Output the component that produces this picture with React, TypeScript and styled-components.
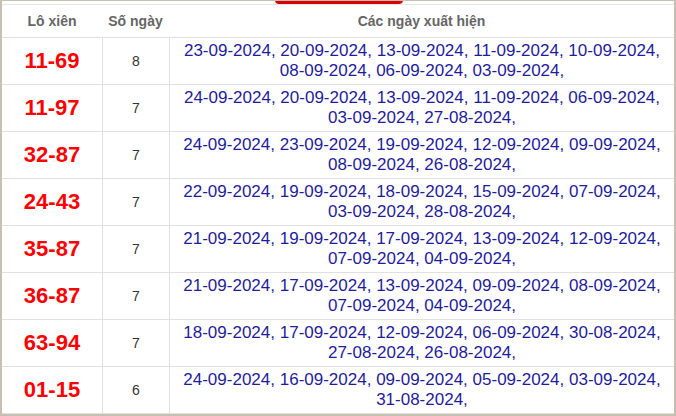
import styled, { createGlobalStyle } from "styled-components"

type PairRow = {
  pair: string
  count: number
  dates: string[]
}

const rows: PairRow[] = [
  {
    pair: "11-69",
    count: 8,
    dates: ["23-09-2024", "20-09-2024", "13-09-2024", "11-09-2024", "10-09-2024", "08-09-2024", "06-09-2024", "03-09-2024"],
  },
  {
    pair: "11-97",
    count: 7,
    dates: ["24-09-2024", "20-09-2024", "13-09-2024", "11-09-2024", "06-09-2024", "03-09-2024", "27-08-2024"],
  },
  {
    pair: "32-87",
    count: 7,
    dates: ["24-09-2024", "23-09-2024", "19-09-2024", "12-09-2024", "09-09-2024", "08-09-2024", "26-08-2024"],
  },
  {
    pair: "24-43",
    count: 7,
    dates: ["22-09-2024", "19-09-2024", "18-09-2024", "15-09-2024", "07-09-2024", "03-09-2024", "28-08-2024"],
  },
  {
    pair: "35-87",
    count: 7,
    dates: ["21-09-2024", "19-09-2024", "17-09-2024", "13-09-2024", "12-09-2024", "07-09-2024", "04-09-2024"],
  },
  {
    pair: "36-87",
    count: 7,
    dates: ["21-09-2024", "17-09-2024", "13-09-2024", "09-09-2024", "08-09-2024", "07-09-2024", "04-09-2024"],
  },
  {
    pair: "63-94",
    count: 7,
    dates: ["18-09-2024", "17-09-2024", "12-09-2024", "06-09-2024", "30-08-2024", "27-08-2024", "26-08-2024"],
  },
  {
    pair: "01-15",
    count: 6,
    dates: ["24-09-2024", "16-09-2024", "09-09-2024", "05-09-2024", "03-09-2024", "31-08-2024"],
  },
]

export default function App() {
  return (
    <>
      <GlobalStyle />
      <Frame>
        <ActiveTab />
        <HeaderRow>
          <HeadCell>Lô xiên</HeadCell>
          <HeadCell>Số ngày</HeadCell>
          <HeadCell>Các ngày xuất hiện</HeadCell>
        </HeaderRow>
        {rows.map((row) => (
          <Row key={row.pair}>
            <PairCell>{row.pair}</PairCell>
            <CountCell>{row.count}</CountCell>
            <DatesCell>
              {row.dates.map((d) => (
                <span key={d}>{d}, </span>
              ))}
            </DatesCell>
          </Row>
        ))}
      </Frame>
    </>
  )
}

const GlobalStyle = createGlobalStyle`
  body {
    margin: 0;
    background: #fff;
    font-family: "Liberation Sans", Arial, sans-serif;
  }
`

const Frame = styled.div`
  position: relative;
  box-sizing: border-box;
  width: 676px;
  height: 416px;
  border: 2px solid #c8beb2;
  border-top-width: 1px;
  padding-top: 3px;
  overflow: hidden;
`

const ActiveTab = styled.div`
  position: absolute;
  top: -1px;
  left: 273px;
  width: 128px;
  height: 4px;
  background: #d90000;
  border-radius: 0 0 4px 4px;
`

const Grid = styled.div`
  display: grid;
  grid-template-columns: 100px 67px 1fr;
  box-sizing: border-box;
`

const HeaderRow = styled(Grid)`
  height: 34px;
  border-top: 1px solid #e6e6e6;
  border-bottom: 1px solid #e0e0e0;
`

const HeadCell = styled.div`
  display: flex;
  align-items: center;
  justify-content: center;
  font-size: 14px;
  font-weight: bold;
  color: #666;
`

const Row = styled(Grid)`
  height: 47px;
  border-bottom: 1px solid #e0e0e0;
`

const Cell = styled.div`
  display: flex;
  align-items: center;
  justify-content: center;
  box-sizing: border-box;
`

const PairCell = styled(Cell)`
  font-size: 22px;
  font-weight: bold;
  color: #ff0000;
`

const CountCell = styled(Cell)`
  border-left: 1px solid #e0e0e0;
  font-size: 14px;
  color: #333;
`

const DatesCell = styled.div`
  box-sizing: border-box;
  border-left: 1px solid #e0e0e0;
  padding: 3px 6px 0;
  text-align: center;
  font-size: 17px;
  line-height: 20px;
  color: #1f1c9c;
`
